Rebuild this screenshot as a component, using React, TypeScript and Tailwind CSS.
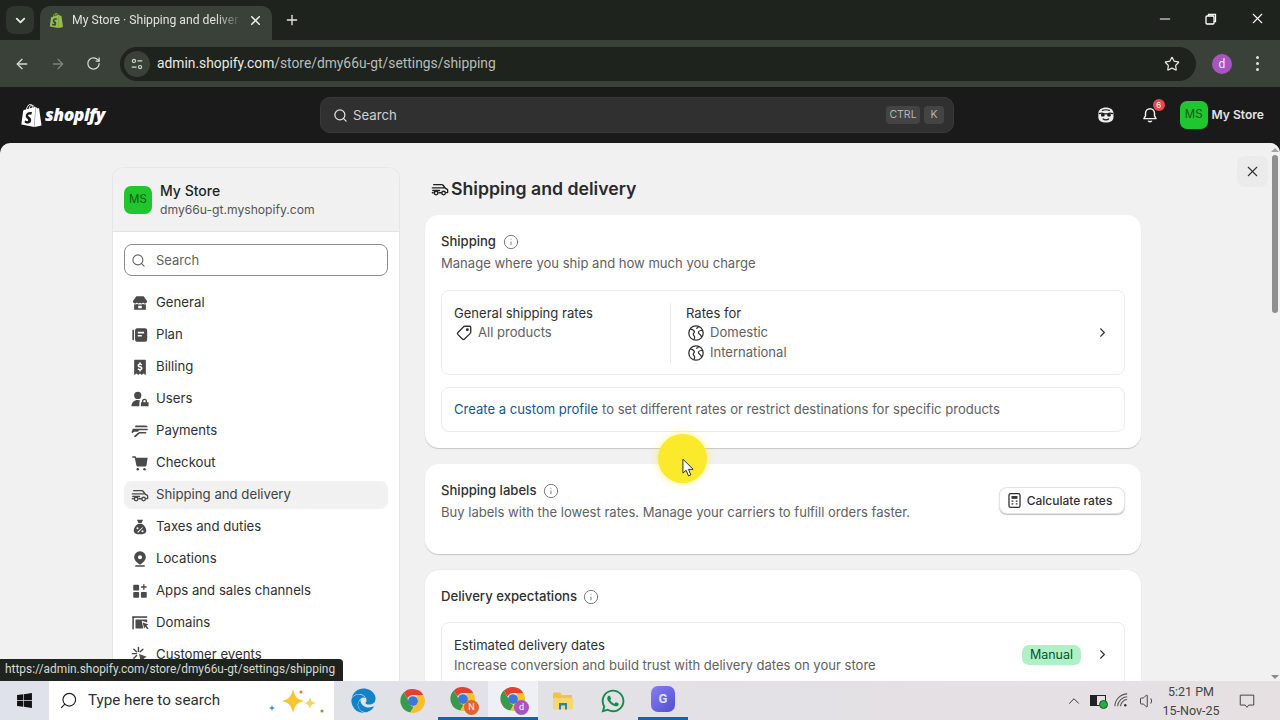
import React from "react";
import { FaWhatsapp, FaWindows, FaEdge } from "react-icons/fa";
import { SiShopify } from "react-icons/si";
import { ChevronDown, X, Plus, ArrowLeft, ArrowRight, RotateCw, Star, Search, Minus, ChevronRight, Info, ChevronUp, Volume1 } from "lucide-react";

type P = { className?: string };
const S = ({ children, className, size = 20 }: { children: React.ReactNode; className?: string; size?: number }) => (
  <svg viewBox="0 0 20 20" width={size} height={size} className={className} fill="currentColor">{children}</svg>
);

const Store = (p: P) => <S {...p}><path d="M6 2.500h8l4 5.500a2.500 2.500 0 0 1-4.500 1.500 2.600 2.600 0 0 1-3.500.3 2.600 2.600 0 0 1-3.500-.3A2.500 2.500 0 0 1 2 8z" /><path fillRule="evenodd" d="M3.500 11.500c1 .3 2.500.1 3.500-.3 1.900 .8 4.100 .8 6 0 1 .4 2.500 .6 3.500 .3V17.500h-13zM8 13v2.800h4V13z" /></S>;
const Plan = (p: P) => <S {...p}><rect x="1.500" y="4" width="1.800" height="12" rx=".9" /><path fillRule="evenodd" d="M6.500 2.500h9a2.500 2.500 0 0 1 2.500 2.500v10a2.500 2.500 0 0 1-2.500 2.500h-9A2.500 2.500 0 0 1 4.500 15V5a2.500 2.500 0 0 1 2-2.500zM7.500 6.500v1.800h7V6.500zm0 3.500v1.600h4.500V10z" /></S>;
const Billing = (p: P) => <S {...p}><path fillRule="evenodd" d="M4.500 2h11a1 1 0 0 1 1 1v16l-2.800-1.800L12 19l-2-1.800L8 19l-1.700-1.800L3.500 19V3a1 1 0 0 1 1-1zm6.300 2.800H9.300v1.200C8 6.300 7.300 7.200 7.300 8.300c0 2.700 3.700 1.900 3.700 3.100 0 .5-.5.8-1.100.8-.6 0-1.200-.3-1.700-.8l-1 1.100c.5.600 1.200 1 2.100 1.200v1.200h1.500v-1.200c1.200-.3 2-1.200 2-2.300 0-2.700-3.700-2-3.700-3.100 0-.4.400-.7 1-.7.5 0 1 .2 1.400.6l1-1.100a3.200 3.200 0 0 0-1.700-1z" /></S>;
const Users = (p: P) => <S {...p}><circle cx="7.500" cy="6" r="4" /><path d="M0.500 18c0-4 3-7 7-7 1 0 2 .2 2.700.6-.7.8-.9 1.500-.9 2.400V18z" /><path fillRule="evenodd" d="M11 13.500h1.200v-1a2.800 2.800 0 0 1 5.600 0v1H19.500V18H11zm2.700 0h2.600v-1a1.300 1.300 0 0 0-2.600 0z" /></S>;
const Payments = (p: P) => <S {...p}><path d="M5 4h11.500a2 2 0 0 1 2 1.800H4.500zM2 7.500h16.500v1.700h-9.500L7.500 10.800h-4L1.500 12.500 .5 11.500zM9 11h7c1.500 0 1.500 1.900 0 1.900H9.500L5 17 3 15.800 7 12.500z" /></S>;
const Cart = (p: P) => <S {...p}><path d="M1.500 2.500h3c.6 0 1 .4 1.100.9l.1.9H18.500l-1.300 8.500c-.1.6-.6 1-1.200 1H7a1 1 0 0 1-1-.9L4.200 4.200H1.500z" /><circle cx="7.500" cy="17" r="1.400" /><circle cx="15" cy="17" r="1.400" /></S>;
const Truck = ({ className, size = 20 }: P & { size?: number }) => (
  <svg viewBox="0 0 20 20" width={size} height={size} className={className} fill="none" stroke="currentColor" strokeWidth="1.500" strokeLinecap="round" strokeLinejoin="round">
    <path d="M3 5.200h9.200c.5 0 .9.200 1.200.6l2.600 3.400 1.800.9c.4.200.7.700.7 1.200V14h-1.500M8.800 14.200h2.700M1.500 8.800h13M2 11.700h7.500M1.500 14.200h1" />
    <circle cx="5.700" cy="14.500" r="2" /><circle cx="14" cy="14.500" r="2" />
  </svg>
);
const Tax = (p: P) => <S {...p}><path d="M6.500 2h7l-1.800 3.500H8.300z" /><path fillRule="evenodd" d="M8 6.300h4c2.800 1.600 5 5 5 7.700 0 2.600-2 4-4.300 4H7.300C5 18 3 16.600 3 14c0-2.700 2.200-6.100 5-7.700zm-.8 3.900a1.100 1.100 0 1 0 0 2.200 1.100 1.100 0 0 0 0-2.200zm5.600 3.400a1.100 1.100 0 1 0 0 2.200 1.100 1.100 0 0 0 0-2.200zm.2-3.700L6.900 15.500l1 1 5.200-5.600z" /></S>;
const Pin = (p: P) => <S {...p}><path fillRule="evenodd" d="M10 1.500a6.500 6.500 0 0 1 6.500 6.500c0 3.200-2.700 5.700-6.500 8.500-3.800-2.800-6.500-5.300-6.500-8.500A6.500 6.500 0 0 1 10 1.500zm0 4.200a2.300 2.300 0 1 0 0 4.600 2.300 2.300 0 0 0 0-4.600z" /><rect x="4.500" y="17" width="11" height="1.600" rx=".8" /></S>;
const Apps = (p: P) => <S {...p}><rect x="2.500" y="3" width="6.500" height="6.500" rx="1" /><rect x="2.500" y="11" width="6.500" height="6.500" rx="1" /><rect x="11" y="11" width="6.500" height="6.500" rx="1" /><path d="M13.500 2.500h1.500v2.300h2.300v1.500H15v2.300h-1.500V6.300h-2.300V4.800h2.300z" /></S>;
const Domain = (p: P) => <S {...p}><rect x="1.500" y="3" width="1.700" height="14" /><path d="M1.500 2.500h16.500v1.800H1.500z" /><path d="M5 6h13v3.500l-6-2 1.600 8.500H5z" /><path d="M13 9.500l6.500 2.300-2.400 1.200 2.400 2.800-1.400 1.200-2.300-2.800-1.200 1.800z" /></S>;
const Events = (p: P) => <S {...p}><path d="M9 9l8.500 3-3.200 1.500 3.200 3.200-1.600 1.600-3.200-3.200L11 18.500z" /><path d="M8.300 1.500v4.500M1.500 8.500H6M3.200 3.500l3 3M3.200 13.500l3-3M13.200 3.500l-3 3" stroke="currentColor" strokeWidth="1.600" strokeLinecap="round" fill="none" /></S>;

const TagIcon = ({ className }: P) => (
  <svg viewBox="0 0 20 20" width="18" height="18" className={className} fill="none" stroke="currentColor" strokeWidth="1.500" strokeLinejoin="round">
    <path d="M11 2.500h5A1.500 1.500 0 0 1 17.500 4v5a2 2 0 0 1-.6 1.400l-6.300 6.300a1.700 1.700 0 0 1-2.400 0l-4.900-4.900a1.700 1.700 0 0 1 0-2.400l6.300-6.300A2 2 0 0 1 11 2.500z" />
    <circle cx="13.700" cy="6.300" r=".9" fill="currentColor" />
  </svg>
);
const Globe = ({ className }: P) => (
  <svg viewBox="0 0 20 20" width="18" height="18" className={className} fill="none" stroke="currentColor" strokeWidth="1.400" strokeLinejoin="round">
    <circle cx="10" cy="10" r="8" />
    <path d="M3.500 5.500c2 .5 4.300 1.500 4.700 3 .3 1.200-1.200 1.500-1.200 2.800 0 1.500 1.500 1.700 1.500 3.200 0 1.200-.5 2.200-1 3M17.500 7.500c-1.800-.5-4.300 0-4.800 1.500-.5 1.700 1.500 2.500 2.500 3.500.7.700 1 1.500 1 2.500M13 2.800c-.5 1.200-1.500 2-3 2.200" />
  </svg>
);
const Calc = ({ className }: P) => (
  <svg viewBox="0 0 20 20" width="17" height="17" className={className} fill="none" stroke="currentColor" strokeWidth="1.500">
    <rect x="3.500" y="1.800" width="13" height="16.400" rx="2" /><rect x="6.500" y="4.800" width="7" height="3.200" fill="currentColor" stroke="none" />
    <path d="M6.500 10.700h2M11.500 10.700h2M6.500 14h2M11.500 14h2" />
  </svg>
);
const Chrome = ({ size = 26 }: { size?: number }) => (
  <svg viewBox="0 0 24 24" width={size} height={size}>
    <path d="M12 1a11 11 0 0 1 9.500 5.500H12a5.500 5.500 0 0 0-5.100 3.400L3.500 4.200A11 11 0 0 1 12 1z" fill="#e5402f" />
    <path d="M3.500 4.200l4.700 8.200a5.500 5.500 0 0 0 4.400 5l-3 5.300A11 11 0 0 1 3.500 4.200z" fill="#3a9a4a" />
    <path d="M21.500 6.500A11 11 0 0 1 9.600 22.700l4.700-8.100a5.500 5.500 0 0 0 .2-8.100z" fill="#f5c02c" />
    <circle cx="12" cy="12" r="4.500" fill="#3b78d8" />
  </svg>
);
const ChromeB = ({ letter, bg }: { letter: string; bg: string }) => (
  <div className="relative w-[26px] h-[26px]">
    <Chrome />
    <div className="absolute right-[-3px] bottom-[-3px] w-[15px] h-[15px] rounded-full flex items-center justify-center text-white text-[9px]" style={{ backgroundColor: bg }}>{letter}</div>
  </div>
);
const Face = ({ className }: P) => (
  <svg viewBox="0 0 20 20" width="18" height="18" className={className}>
    <path d="M10 1.500c5 0 8.500 2.500 8.500 6.500v4.500c0 3.700-3.500 6-8.500 6s-8.500-2.300-8.500-6V8c0-4 3.500-6.500 8.500-6.500z" fill="#ececec" />
    <path d="M2 8.500c2-.8 4.500-.8 6 .2h4c1.500-1 4-1 6-.2" stroke="#1a1a1a" strokeWidth="1.500" fill="none" />
    <rect x="4.500" y="8.500" width="4" height="3.200" rx="1.200" fill="#1a1a1a" /><rect x="11.500" y="8.500" width="4" height="3.200" rx="1.200" fill="#1a1a1a" />
    <path d="M7 14.500c1.500 1.300 4.500 1.300 6 0" stroke="#1a1a1a" strokeWidth="1.500" fill="none" strokeLinecap="round" />
    <path d="M6 4.800c2.500-.8 5.500-.8 8 0" stroke="#1a1a1a" strokeWidth="1.200" fill="none" strokeLinecap="round" />
  </svg>
);

const nav: [string, (p: P & { size?: number }) => React.ReactNode][] = [
  ["General", Store], ["Plan", Plan], ["Billing", Billing], ["Users", Users], ["Payments", Payments], ["Checkout", Cart],
  ["Shipping and delivery", (p) => <Truck {...p} />], ["Taxes and duties", Tax], ["Locations", Pin], ["Apps and sales channels", Apps], ["Domains", Domain], ["Customer events", Events],
];

const InfoI = () => <Info size={16} strokeWidth={1.200} className="text-[#5c5c5c]" />;

export default function App() {
  return (
    <div className="relative w-[1280px] h-[720px] overflow-hidden flex flex-col bg-[#1a1a1a] font-['Inter','Liberation_Sans',sans-serif]">
      {/* tab strip */}
      <div className="h-[40px] shrink-0 bg-[#1e231d] flex items-end pl-[6px] font-['Roboto',sans-serif]">
        <div className="w-[28px] h-[28px] mb-[6px] rounded-lg bg-[#2f362d] flex items-center justify-center text-[#e4e7e2]"><ChevronDown size={15} strokeWidth={3} /></div>
        <div className="ml-[6px] w-[232px] h-[34px] rounded-t-[10px] bg-[#3a4138] flex items-center pl-[9px] pb-[5px] text-[#dfe3dc]">
          <SiShopify size={15} className="text-[#95bf47]" />
          <span className="ml-[8px] w-[170px] whitespace-nowrap text-[12.200px] [mask-image:linear-gradient(to_right,black_85%,transparent)]">My Store · Shipping and deliver</span>
          <X size={15} strokeWidth={2.500} className="ml-[6px] text-[#f0f2ee]" />
        </div>
        <Plus size={16} strokeWidth={2} className="ml-[12px] mb-[12px] text-[#e4e7e2]" />
        <div className="flex-1" />
        <div className="flex items-center mb-[13px] mr-[14px] text-white">
          <Minus size={16} strokeWidth={1.800} />
          <svg viewBox="0 0 12 12" width="12" height="12" fill="none" stroke="currentColor" strokeWidth="1.300" className="ml-[32px]"><rect x="1" y="3" width="8" height="8" rx="1" /><path d="M3.500 3V1.500h7v7H9" /></svg>
          <X size={17} strokeWidth={1.600} className="ml-[32px]" />
        </div>
      </div>
      {/* toolbar */}
      <div className="h-[47px] shrink-0 bg-[#3a4138] flex items-center pl-[14px] pr-[14px] text-[#d5d9d2] font-['Roboto',sans-serif]">
        <ArrowLeft size={16} strokeWidth={2} />
        <ArrowRight size={16} strokeWidth={2} className="ml-[20px] text-[#7c8279]" />
        <RotateCw size={15} strokeWidth={2} className="ml-[20px]" />
        <div className="ml-[19px] w-[1076px] shrink-0 h-[34px] rounded-full bg-[#1e231d] flex items-center pl-[4px] pr-[16px]">
          <div className="w-[26px] h-[26px] rounded-full bg-[#3a4138] flex items-center justify-center">
            <svg viewBox="0 0 16 16" width="14" height="14" fill="none" stroke="currentColor" strokeWidth="1.300"><circle cx="4.500" cy="4.500" r="1.800" /><path d="M8.500 4.500H14M2 11.500h5.500" /><circle cx="11.500" cy="11.500" r="1.800" /></svg>
          </div>
          <span className="ml-[7px] text-[13.820px] text-[#e6e9e3]">admin.shopify.com<span className="text-[#b9bdb6]">/store/dmy66u-gt/settings/shipping</span></span>
          <div className="flex-1" />
          <Star size={16} strokeWidth={1.800} className="text-[#e6e9e3]" />
        </div>
        <div className="ml-[16px] w-[20px] h-[20px] rounded-full bg-[#a855c0] text-[#f5e6fa] text-[12px] flex items-center justify-center">d</div>
        <div className="ml-[24px] flex flex-col gap-[3px]">
          <div className="w-[3px] h-[3px] rounded-full bg-[#dfe3dc]" /><div className="w-[3px] h-[3px] rounded-full bg-[#dfe3dc]" /><div className="w-[3px] h-[3px] rounded-full bg-[#dfe3dc]" />
        </div>
      </div>
      {/* shopify bar */}
      <div className="h-[56px] shrink-0 bg-[#1a1a1a] flex items-center pl-[20px] pr-[16px]">
        <div className="w-[300px] shrink-0 flex items-center gap-[2px] text-white">
          <SiShopify size={23} />
          <span className="font-['Open_Sans',sans-serif] italic font-extrabold text-[17.500px] tracking-[-0.5px] leading-none">shopify</span>
        </div>
        <div className="w-[634px] shrink-0 h-[36px] rounded-[10px] bg-[#303030] border border-[#3a3a3a] flex items-center pl-[12px] pr-[9px] text-[#e3e3e3]">
          <Search size={15} strokeWidth={2} />
          <span className="ml-[5px] pt-[1px] text-[13.200px] text-[#d0d0d0]">Search</span>
          <div className="flex-1" />
          <div className="px-[4px] h-[18px] w-[34px] rounded bg-[#444] text-[10.500px] text-[#b5b5b5] flex items-center justify-center">CTRL</div>
          <div className="ml-[4px] h-[18px] w-[20px] rounded bg-[#444] text-[10.500px] text-[#b5b5b5] flex items-center justify-center">K</div>
        </div>
        <Face className="ml-[143px]" />
        <div className="relative ml-[26px] text-[#f0f0f0]">
          <svg viewBox="0 0 20 20" width="18" height="18" fill="none" stroke="currentColor" strokeWidth="1.600" strokeLinejoin="round"><path d="M10 3a5 5 0 0 0-5 5v3l-1.800 3h13.600L15 11V8a5 5 0 0 0-5-5zM8 16.500c.5 1.300 3.500 1.300 4 0" /></svg>
          <div className="absolute top-[-7px] right-[-6px] w-[12px] h-[12px] rounded-full bg-[#e5484d] text-white text-[8px] flex items-center justify-center">6</div>
        </div>
        <div className="ml-[21px] w-[28px] h-[28px] rounded-[7px] bg-[#1fc62e] text-[#0f5a16] text-[11.500px] flex items-center justify-center">MS</div>
        <span className="ml-[4px] text-[12.100px] font-semibold text-[#e3e3e3] whitespace-nowrap">My Store</span>
      </div>
      {/* page */}
      <div className="flex-1 min-h-0 bg-[#f1f1f1] rounded-t-[10px] flex overflow-hidden">
        <div className="ml-[112px] mt-[24px] w-[288px] shrink-0 rounded-t-[12px] border-x border-t border-[#e6e6e6] bg-white overflow-hidden">
          <div className="h-[64px] bg-[#f1f1f1] border-b border-[#e3e3e3] flex items-center pl-[11px]">
            <div className="w-[28px] h-[28px] rounded-[7px] bg-[#1fc62e] text-[#0f5a16] text-[11.500px] flex items-center justify-center">MS</div>
            <div className="ml-[8px]">
              <div className="text-[14px] leading-[20px] font-medium text-[#1f1f1f]">My Store</div>
              <div className="text-[12.150px] leading-[18px] text-[#555]">dmy66u-gt.myshopify.com</div>
            </div>
          </div>
          <div className="px-[11px] pt-[12px]">
            <div className="h-[32px] rounded-lg border border-[#8a8a8a] flex items-center pl-[6px] text-[#616161]">
              <Search size={15} strokeWidth={1.700} />
              <span className="ml-[10px] pt-[1px] text-[13px]">Search</span>
            </div>
            <div className="mt-[13px] flex flex-col">
              {nav.map(([label, Ic], i) => (
                <div key={label} className={`h-[28px] mb-[4px] shrink-0 rounded-lg flex items-center pl-[6px] ${i === 6 ? "bg-[#f1f1f1]" : ""}`}>
                  <span className="w-[20px] flex justify-center text-[#4a4a4a]"><Ic size={18} /></span>
                  <span className={`ml-[6px] text-[13.200px] ${i === 6 ? "text-[#424242]" : "text-[#303030]"}`}>{label}</span>
                </div>
              ))}
            </div>
          </div>
        </div>
        <div className="ml-[25px] w-[716px] shrink-0">
          <div className="mt-[33px] h-[26px] flex items-center pl-[6px] text-[#1f1f1f]">
            <Truck size={18} />
            <h1 className="ml-[2px] text-[17.700px] font-semibold text-[#2a2a2a]">Shipping and delivery</h1>
          </div>
          <div className="mt-[13px] h-[233px] rounded-[14px] bg-white shadow-[0_1px_1px_rgba(0,0,0,0.18)] px-[16px] pt-[17px]">
            <div className="flex items-center h-[20px] text-[13.050px] font-medium text-[#303030]">Shipping<span className="ml-[7px]"><InfoI /></span></div>
            <div className="mt-[1px] leading-[20px] text-[13.050px] text-[#616161]">Manage where you ship and how much you charge</div>
            <div className="mt-[17px] h-[85px] rounded-lg border border-[#ebebeb] flex items-center pr-[14px]">
              <div className="w-[229px] h-[60px] border-r border-[#ebebeb] pl-[12px] self-center">
                <div className="h-[20px] leading-[20px] text-[13.050px] text-[#303030]">General shipping rates</div>
                <div className="h-[20px] flex items-center text-[13.050px] text-[#616161]"><TagIcon className="ml-[1px] text-[#303030]" /><span className="ml-[5px]">All products</span></div>
              </div>
              <div className="pl-[15px] flex-1">
                <div className="h-[20px] leading-[20px] text-[13.050px] text-[#303030]">Rates for</div>
                <div className="h-[20px] flex items-center text-[13.050px] text-[#616161]"><Globe className="ml-[1px] text-[#303030]" /><span className="ml-[5px]">Domestic</span></div>
                <div className="h-[20px] flex items-center text-[13.050px] text-[#616161]"><Globe className="ml-[1px] text-[#303030]" /><span className="ml-[5px]">International</span></div>
              </div>
              <ChevronRight size={15} strokeWidth={1.700} className="text-[#303030]" />
            </div>
            <div className="mt-[12px] h-[45px] rounded-lg border border-[#ebebeb] flex items-center pl-[12px] text-[13.050px] text-[#616161]">
              <span className="text-[#15588f]">Create a custom profile</span><span className="ml-[4px]">to set different rates or restrict destinations for specific products</span>
            </div>
          </div>
          <div className="mt-[16px] h-[90px] rounded-[14px] bg-white shadow-[0_1px_1px_rgba(0,0,0,0.18)] pl-[16px] pr-[16px] pt-[16px] flex items-start">
            <div className="flex-1">
              <div className="flex items-center h-[20px] pt-[1px] text-[13.100px] font-medium text-[#303030]">Shipping labels<span className="ml-[7px]"><InfoI /></span></div>
              <div className="mt-[2px] leading-[20px] text-[13.050px] text-[#616161]">Buy labels with the lowest rates. Manage your carriers to fulfill orders faster.</div>
            </div>
            <div className="mt-[7px] h-[27px] w-[126px] rounded-lg bg-white border border-[#e3e3e3] shadow-[0_1px_1px_rgba(0,0,0,0.25)] flex items-center justify-center gap-[4px] pr-[6px] text-[12px] font-medium text-[#303030]">
              <Calc className="text-[#303030]" />Calculate rates
            </div>
          </div>
          <div className="mt-[16px] h-[200px] rounded-t-[14px] bg-white px-[16px] pt-[17px] shadow-[0_0_1px_rgba(0,0,0,0.15)]">
            <div className="flex items-center h-[20px] text-[13.150px] font-medium text-[#303030]">Delivery expectations<span className="ml-[6px]"><InfoI /></span></div>
            <div className="mt-[15px] h-[120px] rounded-t-lg border border-[#ebebeb] flex items-start pt-[12px] pl-[12px] pr-[14px]">
              <div className="flex-1">
                <div className="leading-[20px] text-[13.050px] text-[#303030]">Estimated delivery dates</div>
                <div className="leading-[20px] text-[13.050px] text-[#616161]">Increase conversion and build trust with delivery dates on your store</div>
              </div>
              <div className="mt-[10px] h-[20px] w-[59px] rounded-[7px] bg-[#aff0c4] text-[#0c5132] text-[12.500px] flex items-center justify-center">Manual</div>
              <ChevronRight size={15} strokeWidth={1.700} className="ml-[14px] mt-[12px] text-[#303030]" />
            </div>
          </div>
        </div>
        <div className="flex-1 flex justify-end items-start">
          <div className="mt-[13px] mr-[2px] w-[31px] h-[31px] rounded-lg bg-[#ebebeb] flex items-center justify-center text-[#303030]"><X size={17} strokeWidth={1.500} /></div>
        </div>
        <div className="w-[10px] shrink-0 bg-[#f1f1f1] flex flex-col items-center pt-[5px]">
          <div className="w-0 h-0 border-x-[4px] border-x-transparent border-b-[4px] border-b-[#a3a3a3]" />
          <div className="mt-[3px] w-[6px] h-[158px] rounded-full bg-[#8f8f8f]" />
          <div className="flex-1" />
          <div className="mb-[2px] w-0 h-0 border-x-[4px] border-x-transparent border-t-[4px] border-t-[#8a8a8a]" />
        </div>
      </div>
      {/* taskbar */}
      <div className="h-[39px] shrink-0 bg-[linear-gradient(to_right,#dfe2ea,#e6e0e2)] flex items-center font-['Roboto',sans-serif]">
        <div className="w-[49px] flex justify-center text-[#111]"><FaWindows size={17} /></div>
        <div className="w-[285px] h-[39px] bg-white flex items-center pl-[10px] text-[#222]">
          <Search size={19} strokeWidth={1.500} className="-scale-x-100" />
          <span className="ml-[10px] text-[15.200px] text-[#303030]">Type here to search</span>
          <div className="flex-1" />
          <svg viewBox="0 0 64 30" width="64" height="30" className="mr-[5px]">
            <path d="M28 3c2 8 4 10 11 12-7 2-9 4-11 12-2-8-4-10-11-12 7-2 9-4 11-12z" fill="#f9c52e" />
            <path d="M45 11c1 4 2 5 6 6-4 1-5 2-6 6-1-4-2-5-6-6 4-1 5-2 6-6z" fill="#f4d35e" />
            <path d="M7 19c.5 2 1 2.500 3 3-2 .5-2.500 1-3 3-.5-2-1-2.500-3-3 2-.5 2.500-1 3-3z" fill="#2f8fe0" />
            <circle cx="36" cy="6" r="1.500" fill="#e0743a" /><circle cx="57" cy="25" r="1.500" fill="#7d9b3c" />
          </svg>
        </div>
        <div className="w-[4px]" />
        <div className="flex items-center">
          <div className="w-[50px] h-[39px] flex items-center justify-center text-[#1083c9]"><FaEdge size={25} /></div>
          <div className="w-[50px] h-[39px] flex items-center justify-center"><Chrome /></div>
          <div className="w-[50px] h-[39px] flex items-center justify-center border-b-[3px] border-b-[#0a66b8]"><ChromeB letter="N" bg="#e2642b" /></div>
          <div className="w-[50px] h-[39px] flex items-center justify-center bg-[#eef0f5] border-b-[3px] border-b-[#0a66b8]"><ChromeB letter="d" bg="#a855c0" /></div>
          <div className="w-[50px] h-[39px] flex items-center justify-center">
            <svg viewBox="0 0 24 24" width="24" height="24"><path d="M2 5a1.500 1.500 0 0 1 1.500-1.500H9l2 2.500h10v4H2z" fill="#f2c34a" /><path d="M2 9h20v10a1.500 1.500 0 0 1-1.500 1.500h-17A1.500 1.500 0 0 1 2 19z" fill="#f7d774" /><path d="M8 14h8v6.500H14v-4h-4v4H8z" fill="#2a7fc4" /></svg>
          </div>
          <div className="w-[50px] h-[39px] flex items-center justify-center text-[#128c4a]"><FaWhatsapp size={26} /></div>
          <div className="w-[50px] h-[39px] flex items-center justify-center border-b-[3px] border-b-[#0a66b8]">
            <div className="w-[24px] h-[26px] rounded-[7px] bg-[linear-gradient(135deg,#8a7df0,#4f4fd0)] text-[#dfe4ff] text-[13px] font-bold flex items-center justify-center">G</div>
          </div>
        </div>
        <div className="flex-1" />
        <div className="flex items-center text-[#333]">
          <ChevronUp size={18} strokeWidth={1.300} />
          <div className="relative ml-[7px] w-[16px] h-[11px] border border-[#222] bg-[linear-gradient(to_right,#222_40%,transparent_40%)]">
            <div className="absolute right-[-3px] bottom-[-4px] w-[9px] h-[9px] rounded-full bg-[#2aa84a] border border-[#145c27]" />
          </div>
          <svg viewBox="0 0 18 18" width="17" height="17" fill="none" stroke="#555" strokeWidth="1.100" className="ml-[7px]"><path d="M2 15C2 8 8 2 15 2M5 15c0-5 5-10 10-10M8 15c0-3 3-7 7-7" /><circle cx="13" cy="14" r="1.300" fill="#333" stroke="none" /></svg>
          <Volume1 size={18} strokeWidth={1.200} className="ml-[9px]" />
          <div className="-ml-[2px] w-[72px] text-center text-[12.500px] leading-[19px] text-[#444]"><div>5:21 PM</div><div>15-Nov-25</div></div>
          <svg viewBox="0 0 20 20" width="18" height="18" fill="none" stroke="#444" strokeWidth="1.100" className="ml-[11px] mr-[24px]"><path d="M2.500 3.500h15v11h-5.500L10 17l-2-2.500H2.500z" /></svg>
        </div>
      </div>
      {/* overlays */}
      <div className="absolute left-0 top-[659px] h-[22px] w-[343px] rounded-tr-[4px] bg-[#1e231d] flex items-center pl-[5px] text-[11.900px] text-[#d5d9d2] font-['Roboto',sans-serif] whitespace-nowrap">https://admin.shopify.com/store/dmy66u-gt/settings/shipping</div>
      <div className="absolute left-[658px] top-[434px] w-[49px] h-[49px] rounded-full bg-[#fbe92c] shadow-[0_0_8px_rgba(251,233,44,0.6)]" />
      <svg viewBox="0 0 14 20" width="13" height="19" className="absolute left-[682px] top-[458px]"><path d="M1 1v15l3.500-3 2.500 6 2.500-1-2.500-6h5z" fill="#fff" stroke="#222" strokeWidth="1" strokeLinejoin="round" /></svg>
    </div>
  );
}
